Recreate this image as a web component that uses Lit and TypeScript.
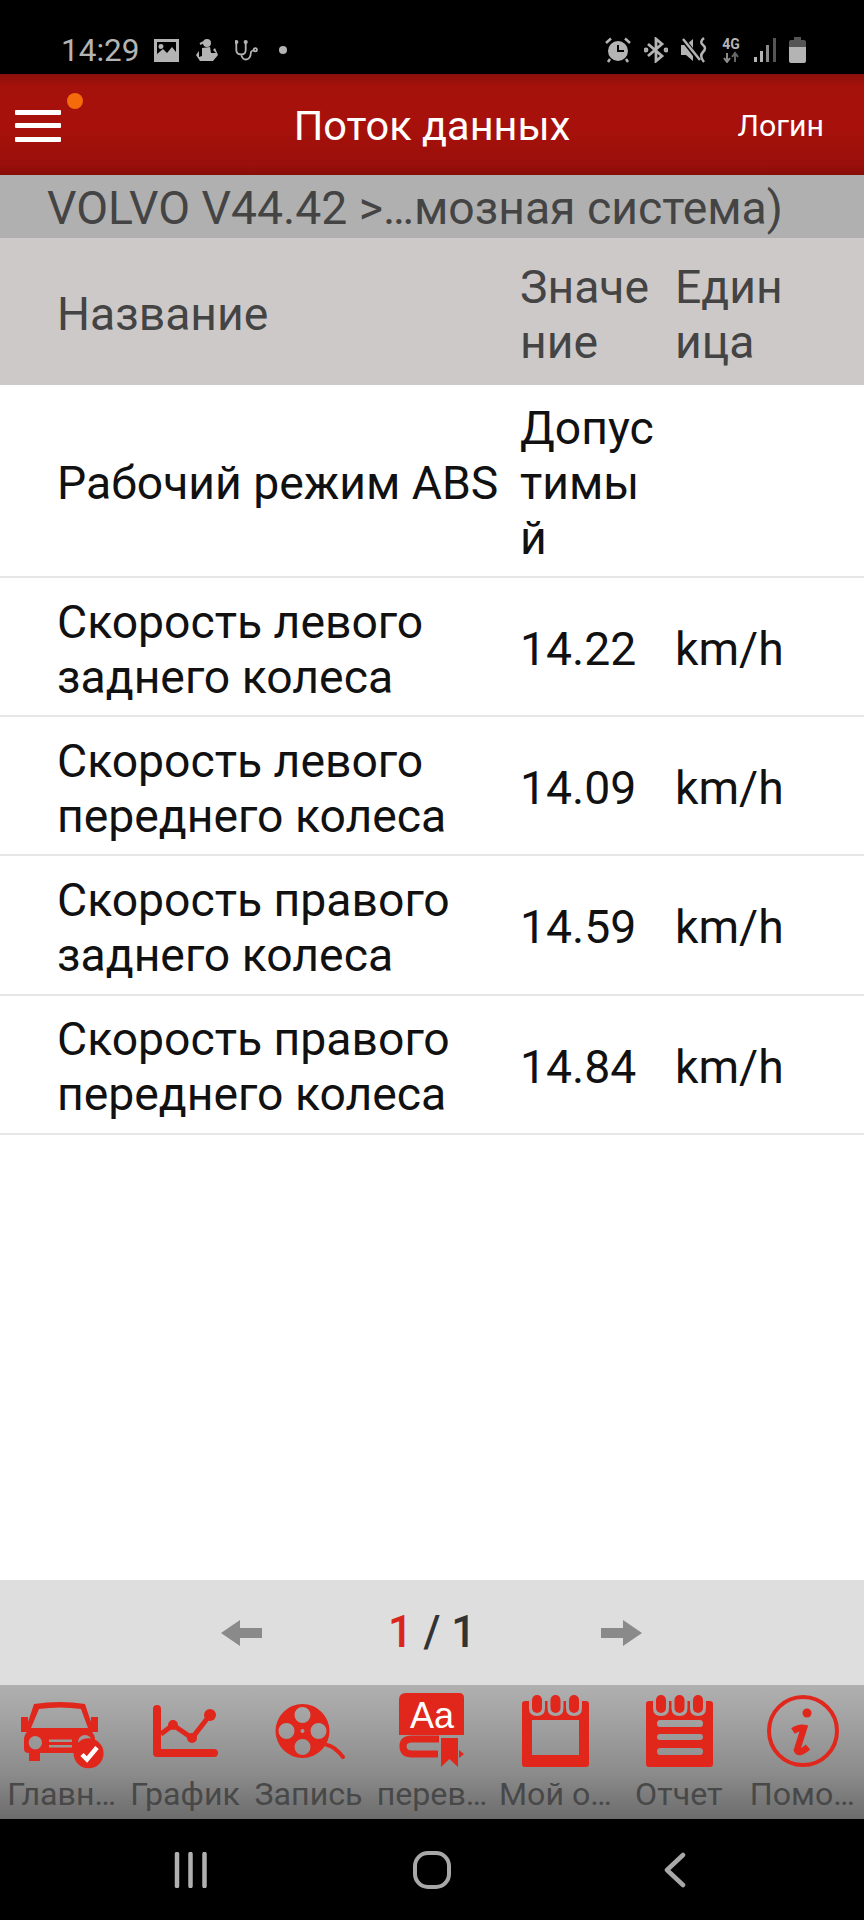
import { LitElement, html, css, svg } from "lit";
import { customElement } from "lit/decorators.js";

const RED = "#e1261c";
const rows = [
  { name: html`Рабочий режим ABS`, value: html`Допус<br />тимы<br />й`, unit: "", tall: true },
  { name: html`Скорость левого<br />заднего колеса`, value: "14.22", unit: "km/h" },
  { name: html`Скорость левого<br />переднего колеса`, value: "14.09", unit: "km/h" },
  { name: html`Скорость правого<br />заднего колеса`, value: "14.59", unit: "km/h" },
  { name: html`Скорость правого<br />переднего колеса`, value: "14.84", unit: "km/h" },
];

const rings = svg`${[27, 45.5, 64].map(
  (x) => svg`<path d="M${x - 8} 10V18Q${x - 8} 26 ${x} 26Q${x + 8} 26 ${x + 8} 18V10Z" fill="#a4a4a4" /><rect x=${x - 5} y="5" width="10" height="18" rx="5" fill=${RED} />`
)}`;

const tools = [
  {
    label: "Главн…",
    icon: svg`<path fill=${RED} fill-rule="evenodd" d="M17 14Q43 10 68 14L74 32V27H81V42H75Q78 45 78 50V59Q78 63 74 63V71H63V63H23V71H12V63Q7 63 7 59V50Q7 45 10 42H4V27H11V32ZM22 19L14 38H71L64 19Q43 16 22 19ZM18.300 46A6.700 6.700 0 1 0 18.310 59.400A6.700 6.700 0 1 0 18.300 46ZM32 49.500V52H55V49.500ZM32 55V57.500H55V55ZM68 45A7 7 0 1 0 68.010 59A7 7 0 1 0 68 45Z"/>
      <circle cx="71.600" cy="63.300" r="15" fill=${RED}/><path d="M65 64.500l5 5l10-12" fill="none" stroke="#fff" stroke-width="4.500"/>`,
  },
  {
    label: "График",
    icon: svg`<path d="M17 19V63H74" fill="none" stroke=${RED} stroke-width="8" stroke-linecap="round" stroke-linejoin="round"/>
      <path d="M21 44L33 35L52 48L70 25" fill="none" stroke=${RED} stroke-width="5"/>
      <circle cx="33" cy="35" r="5" fill=${RED}/><circle cx="52" cy="48" r="5" fill=${RED}/><circle cx="70" cy="25" r="6" fill=${RED}/>`,
  },
  {
    label: "Запись",
    icon: svg`<path fill=${RED} fill-rule="evenodd" d="M38.500 14a27 27 0 1 0 .01 54a27 27 0 1 0-.01-54ZM38.500 39a2 2 0 1 1-.01 4a2 2 0 1 1 .01-4ZM38.500 17a8 8 0 1 1-.01 16a8 8 0 1 1 .01-16ZM38.500 49a8 8 0 1 1-.01 16a8 8 0 1 1 .01-16ZM22.500 33a8 8 0 1 1-.01 16a8 8 0 1 1 .01-16ZM54.500 33a8 8 0 1 1-.01 16a8 8 0 1 1 .01-16Z"/>
      <path d="M63 55Q70 56 79 67" fill="none" stroke=${RED} stroke-width="4" stroke-linecap="round"/>`,
  },
  {
    label: "перев…",
    icon: svg`<path fill=${RED} d="M19 3H72Q77 3 77 8V45H12V10Q12 3 19 3Z"/>
      <text x="45" y="38" text-anchor="middle" class="aa">Aa</text>
      <path d="M51 64H25Q16 64 16 56Q16 49 25 49H52" fill="none" stroke=${RED} stroke-width="7"/>
      <path fill=${RED} d="M54 48H71V77L62.500 69L54 77ZM72 60L77 64L72 68Z"/>`,
  },
  {
    label: "Мой о…",
    icon: svg`<path fill=${RED} fill-rule="evenodd" d="M15 11H76Q79 11 79 14V74Q79 77 76 77H15Q12 77 12 74V14Q12 11 15 11ZM22 30V65H69V30Z"/>${rings}`,
  },
  {
    label: "Отчет",
    icon: svg`<path fill=${RED} fill-rule="evenodd" d="M15 11H76Q79 11 79 14V74Q79 77 76 77H15Q12 77 12 74V14Q12 11 15 11ZM26 30Q23 30 23 33.500Q23 37 26 37H66Q69 37 69 33.500Q69 30 66 30ZM26 44Q23 44 23 47Q23 50 26 50H66Q69 50 69 47Q69 44 66 44ZM26 58Q23 58 23 61.500Q23 65 26 65H66Q69 65 69 61.500Q69 58 66 58Z"/>${rings}`,
  },
  {
    label: "Помо…",
    icon: svg`<circle cx="46" cy="41" r="34" fill="none" stroke=${RED} stroke-width="4"/>
      <circle cx="50" cy="23" r="4.500" fill=${RED}/>
      <path d="M36 41Q42 37 47 38L40 60Q42 65 51 57" fill="none" stroke=${RED} stroke-width="6.500"/>`,
  },
];

@customElement("app-root")
export class AppRoot extends LitElement {
  static styles = css`
    :host {
      display: flex;
      flex-direction: column;
      width: 864px;
      height: 1920px;
      background: #fff;
      font-family: Roboto, "Noto Sans", sans-serif;
      overflow: hidden;
    }
    svg {
      display: block;
      flex: none;
    }
    .status {
      height: 74px;
      box-sizing: border-box;
      padding: 26px 58px 0 61px;
      background: #000;
      display: flex;
      align-items: center;
      color: #b4b4b4;
      font-size: 31.5px;
      flex: none;
    }
    .status-left {
      display: flex;
      align-items: center;
      gap: 17px;
      flex: 1;
    }
    .time {
      margin-right: -2px;
    }
    .pip {
      margin-left: 3px;
    }
    .status-right {
      display: flex;
      align-items: center;
      gap: 13px;
    }
    .appbar {
      height: 101px;
      flex: none;
      background: linear-gradient(#8a100b 0, #a5110b 12%, #a8110b 50%, #9a0f0a 90%, #860d09 100%);
      display: grid;
      grid-template-columns: 1fr auto 1fr;
      align-items: center;
      color: #fff;
    }
    .menu {
      position: relative;
      width: 46px;
      margin: 2px 0 0 15px;
      display: flex;
      flex-direction: column;
      gap: 8.5px;
    }
    .menu i {
      display: block;
      height: 5px;
      background: #fff;
      border-radius: 1px;
    }
    .dot {
      position: absolute;
      left: 52px;
      top: -17px;
      width: 16px;
      height: 16px;
      border-radius: 50%;
      background: #f56a0a;
    }
    .title {
      font-size: 41.5px;
      margin-top: 2px;
    }
    .login {
      justify-self: end;
      font-size: 30.3px;
      margin: 2px 40px 0 0;
    }
    .crumb {
      height: 63px;
      flex: none;
      box-sizing: border-box;
      padding: 2px 0 0 47px;
      background: #b0b0b0;
      color: #444;
      font-size: 46.3px;
      line-height: 63px;
      white-space: nowrap;
    }
    .grid-row {
      display: grid;
      grid-template-columns: 520px 155px 1fr;
      align-items: center;
      box-sizing: border-box;
      padding-top: 6px;
      font-size: 46.3px;
      line-height: 55px;
    }
    .name {
      padding-left: 57px;
    }
    .thead {
      height: 147px;
      flex: none;
      background: #cdc9c9;
      color: #444;
    }
    .row {
      height: 139.2px;
      flex: none;
      color: #111;
      border-bottom: 2px solid #e6e6e6;
    }
    .row.tall {
      height: 193px;
    }
    .spacer {
      flex: 1;
    }
    .pager {
      height: 105px;
      flex: none;
      background: #dedede;
      display: flex;
      align-items: center;
      justify-content: center;
      gap: 62px;
    }
    .count {
      width: 214px;
      text-align: center;
      font-size: 43.5px;
      font-weight: 500;
      color: #333;
      white-space: pre;
    }
    .count b {
      color: #d9261c;
      font-weight: 500;
    }
    .tools {
      height: 134px;
      flex: none;
      display: grid;
      grid-template-columns: repeat(7, 1fr);
      background: linear-gradient(#b0b0b0 0, #a0a0a0 30%, #8c8c8c 65%, #6c6c6c 100%);
    }
    .tool {
      display: flex;
      flex-direction: column;
      align-items: center;
      padding-top: 5px;
      color: #484848;
      font-size: 32.2px;
      line-height: 36px;
      white-space: nowrap;
    }
    .tool span {
      margin-top: 2px;
    }
    .aa {
      font-family: "Liberation Sans", sans-serif;
      font-size: 36px;
      fill: #fff;
    }
    .nav {
      height: 101px;
      flex: none;
      background: #000;
      display: flex;
      align-items: center;
      justify-content: center;
      gap: 202px;
    }
  `;

  render() {
    return html`
      <div class="status">
        <div class="status-left">
          <span class="time">14:29</span>
          <svg width="25" height="25" viewBox="0 0 25 25"><path fill="#b4b4b4" fill-rule="evenodd" d="M0 1H25V24H0ZM3 4V16L9 11L13 15L18 9L22 14V4ZM7 6a2.500 2.500 0 1 1-.01 5a2.500 2.500 0 1 1 .01-5Z"/></svg>
          <svg width="22" height="25" viewBox="0 0 22 25"><circle cx="11" cy="5" r="4" fill="#b4b4b4"/><path d="M8 4L4 6" stroke="#b4b4b4" stroke-width="2"/><path fill="#b4b4b4" d="M6 10L14 9L15 15H20L17 12L19 10L22 17L17 23H4L0 17L3 13L3 19L6 18Z"/></svg>
          <svg width="24" height="25" viewBox="0 0 24 25" fill="none" stroke="#b4b4b4" stroke-width="1.800"><path d="M1.300 4V12Q1.300 16.500 6.300 16.500Q10.700 16.500 10.700 12V4M6.300 16.500Q7 21.500 11 21.500Q15.500 21.500 16 14Q17 12.500 18.800 12"/><circle cx="20.300" cy="11.800" r="1.600"/><circle cx="1.300" cy="4" r="1.200" fill="#b4b4b4"/><circle cx="10.700" cy="4" r="1.200" fill="#b4b4b4"/></svg>
          <svg width="8" height="8" viewBox="0 0 8 8" class="pip"><circle cx="4" cy="4" r="4" fill="#b4b4b4"/></svg>
        </div>
        <div class="status-right">
          <svg width="26" height="26" viewBox="0 0 26 26"><path fill="#b4b4b4" fill-rule="evenodd" d="M13 4a10 10 0 1 1-.01 20a10 10 0 1 1 .01-20ZM12 8V15H19V13H14V8Z"/><path d="M1 6L6 1.500M25 6L20 1.500M5 22L3 25M21 22L23 25" stroke="#b4b4b4" stroke-width="2.500"/></svg>
          <svg width="24" height="26" viewBox="0 0 24 26" fill="none" stroke="#b4b4b4" stroke-width="2.800"><path d="M4 7L18 19L12 24V2L18 7L4 19"/><circle cx="2" cy="13" r="1" /><circle cx="22" cy="13" r="1"/></svg>
          <svg width="27" height="26" viewBox="0 0 27 26"><path fill="#b4b4b4" d="M0 8H5L12 2V24L5 18H0Z"/><path d="M1 1L19 24" stroke="#000" stroke-width="5"/><path d="M2 2L19 23" stroke="#b4b4b4" stroke-width="2.500"/><path d="M23 1Q18 5 22 8T22 15T23 25" fill="none" stroke="#b4b4b4" stroke-width="2.500"/></svg>
          <svg width="20" height="26" viewBox="0 0 20 26"><text x="10" y="12" text-anchor="middle" font-family="Roboto" font-weight="700" font-size="14" fill="#b4b4b4">4G</text><path d="M6 16V25M3 21L6 25L9 21" fill="none" stroke="#8a8a8a" stroke-width="2"/><path d="M14 25V16M11 20L14 16L17 20" fill="none" stroke="#666" stroke-width="2"/></svg>
          <svg width="22" height="26" viewBox="0 0 22 26"><rect x="0" y="20" width="3" height="5" fill="#b4b4b4"/><rect x="6" y="14" width="3" height="11" fill="#b4b4b4"/><rect x="12" y="8" width="3" height="17" fill="#8a8a8a"/><rect x="19" y="1" width="3" height="24" fill="#555"/></svg>
          <svg width="17" height="26" viewBox="0 0 17 26" class="batt"><path fill="#555" d="M5 0H12V3H15Q17 3 17 5V10H0V5Q0 3 2 3H5Z"/><path fill="#b4b4b4" d="M0 10H17V24Q17 26 15 26H2Q0 26 0 24Z"/></svg>
        </div>
      </div>

      <div class="appbar">
        <div class="menu"><i></i><i></i><i></i><div class="dot"></div></div>
        <div class="title">Поток данных</div>
        <div class="login">Логин</div>
      </div>

      <div class="crumb">VOLVO V44.42 &gt;…мозная система)</div>

      <div class="grid-row thead">
        <div class="name">Название</div>
        <div>Значе<br />ние</div>
        <div>Един<br />ица</div>
      </div>

      ${rows.map(
        (r) => html`<div class="grid-row row ${r.tall ? "tall" : ""}">
          <div class="name">${r.name}</div>
          <div>${r.value}</div>
          <div>${r.unit}</div>
        </div>`
      )}

      <div class="spacer"></div>

      <div class="pager">
        <svg width="42" height="28" viewBox="0 0 42 28"><path fill="#8a8a8a" d="M0 14L19 1V9H41V19H19V27Z"/></svg>
        <div class="count"><b>1</b> / 1</div>
        <svg width="42" height="28" viewBox="0 0 42 28"><path fill="#8a8a8a" d="M41 14L22 1V9H0V19H22V27Z"/></svg>
      </div>

      <div class="tools">
        ${tools.map(
          (t) => html`<div class="tool">
            <svg width="90" height="84" viewBox="0 0 90 84">${t.icon}</svg>
            <span>${t.label}</span>
          </div>`
        )}
      </div>

      <div class="nav">
        <svg width="40" height="36" viewBox="0 0 40 36"><path d="M7 2V34M20.500 2V34M34.500 2V34" stroke="#b0b0b0" stroke-width="4.500" stroke-linecap="round"/></svg>
        <svg width="40" height="38" viewBox="0 0 40 38"><rect x="3" y="2" width="34" height="34" rx="13" fill="none" stroke="#a8a8a8" stroke-width="4"/></svg>
        <svg width="40" height="36" viewBox="0 0 40 36"><path d="M29 3L13 18L29 33" fill="none" stroke="#a8a8a8" stroke-width="4.500" stroke-linecap="round" stroke-linejoin="round"/></svg>
      </div>
    `;
  }
}
